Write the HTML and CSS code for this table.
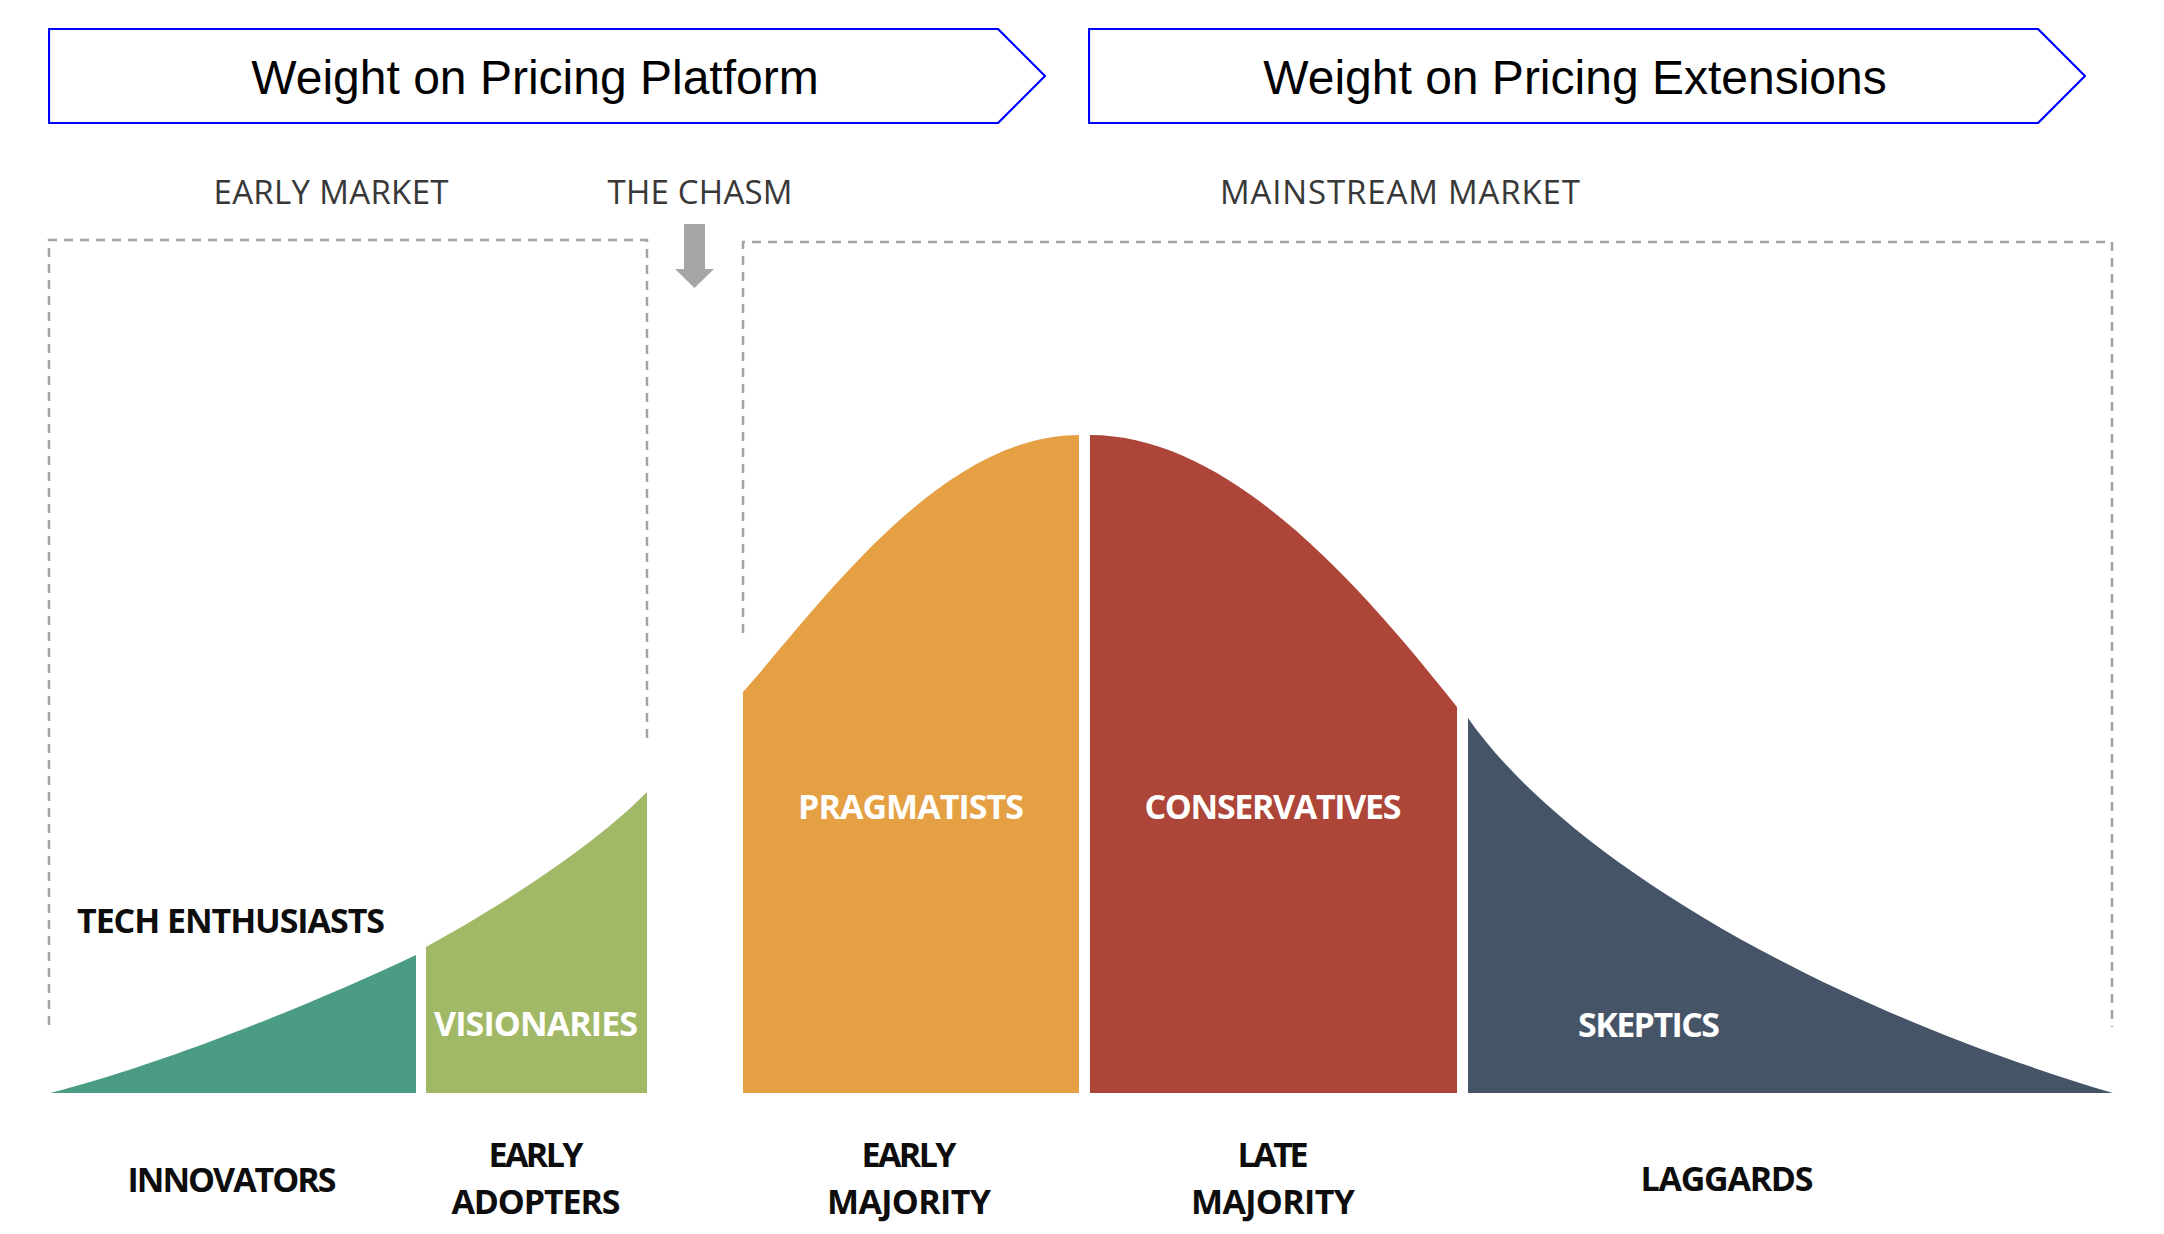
FILE: index.html
```html
<!DOCTYPE html>
<html lang="en">
<head>
<meta charset="utf-8">
<title>Crossing the Chasm – Pricing Weight</title>
<link rel="stylesheet" href="styles.css">
</head>
<body>
<div class="page">
  <header class="phases">
    <div class="phase">
      <svg class="phase-shape" viewBox="0 0 998 96" preserveAspectRatio="none" aria-hidden="true">
        <polygon points="1,1 950,1 997,48 950,95 1,95"/>
      </svg>
      <span class="phase-title">Weight on Pricing Platform</span>
    </div>
    <div class="phase">
      <svg class="phase-shape" viewBox="0 0 998 96" preserveAspectRatio="none" aria-hidden="true">
        <polygon points="1,1 950,1 997,48 950,95 1,95"/>
      </svg>
      <span class="phase-title">Weight on Pricing Extensions</span>
    </div>
  </header>

  <svg class="chart" viewBox="0 124 2164 1110" width="2164" height="1110">
    <!-- market headings -->
    <text class="market" x="331" y="204" textLength="235" lengthAdjust="spacing" text-anchor="middle">EARLY MARKET</text>
    <text class="market" x="700" y="204" textLength="185" lengthAdjust="spacing" text-anchor="middle">THE CHASM</text>
    <text class="market" x="1400" y="204" textLength="360" lengthAdjust="spacing" text-anchor="middle">MAINSTREAM MARKET</text>

    <!-- chasm arrow -->
    <path class="arrow" d="M684,224 H705 V269 H714 L694.5,288 L675,269 H684 Z"/>

    <!-- market frames -->
    <path class="frame" d="M49,1025 V240 H647 V740"/>
    <path class="frame" d="M743,633 V242 H2112 V1027"/>

    <!-- adoption curve segments -->
    <path class="seg seg-innovators" d="M50,1093 C150,1068 300,1010 416,955 V1093 Z"/>
    <path class="seg seg-early-adopters" d="M426,1093 V947 C490,912 590,850 647,792 V1093 Z"/>
    <path class="seg seg-early-majority" d="M743,1093 V692 C820,605 940,435 1079,435 V1093 Z"/>
    <path class="seg seg-late-majority" d="M1090,1093 V435 C1230,435 1360,585 1457,707 V1093 Z"/>
    <path class="seg seg-laggards" d="M1468,1093 V718 C1560,850 1800,1000 2113,1093 Z"/>

    <!-- segment personas -->
    <text class="persona dark" x="231" y="933" textLength="308" lengthAdjust="spacing" text-anchor="middle">TECH ENTHUSIASTS</text>
    <text class="persona light" x="536" y="1036" textLength="204" lengthAdjust="spacing" text-anchor="middle">VISIONARIES</text>
    <text class="persona light" x="911" y="819" textLength="226" lengthAdjust="spacing" text-anchor="middle">PRAGMATISTS</text>
    <text class="persona light" x="1273" y="819" textLength="257" lengthAdjust="spacing" text-anchor="middle">CONSERVATIVES</text>
    <text class="persona light" x="1649" y="1037" textLength="142" lengthAdjust="spacing" text-anchor="middle">SKEPTICS</text>

    <!-- segment names -->
    <text class="segment-name" x="232" y="1192" textLength="209" lengthAdjust="spacing" text-anchor="middle">INNOVATORS</text>
    <text class="segment-name" x="536" y="1167" textLength="95" lengthAdjust="spacing" text-anchor="middle">EARLY</text>
    <text class="segment-name" x="536" y="1214" textLength="169" lengthAdjust="spacing" text-anchor="middle">ADOPTERS</text>
    <text class="segment-name" x="909" y="1167" textLength="95" lengthAdjust="spacing" text-anchor="middle">EARLY</text>
    <text class="segment-name" x="909" y="1214" textLength="164" lengthAdjust="spacing" text-anchor="middle">MAJORITY</text>
    <text class="segment-name" x="1273" y="1167" textLength="71" lengthAdjust="spacing" text-anchor="middle">LATE</text>
    <text class="segment-name" x="1273" y="1214" textLength="164" lengthAdjust="spacing" text-anchor="middle">MAJORITY</text>
    <text class="segment-name" x="1727" y="1191" textLength="173" lengthAdjust="spacing" text-anchor="middle">LAGGARDS</text>
  </svg>
</div>
</body>
</html>
```

FILE: styles.css
```css
html, body {
  margin: 0;
  padding: 0;
  background: #ffffff;
}

.page {
  width: 2164px;
  height: 1234px;
  overflow: hidden;
  background: #ffffff;
}

.phases {
  display: flex;
  gap: 42px;
  padding: 28px 0 0 48px;
  height: 96px;
}

.phase {
  position: relative;
  width: 998px;
  height: 96px;
  display: flex;
  align-items: center;
  justify-content: center;
  padding: 2px 24px 0 0;
  box-sizing: border-box;
}

.phase-shape {
  position: absolute;
  inset: 0;
  width: 100%;
  height: 100%;
}

.phase-shape polygon {
  fill: #ffffff;
  stroke: #0000ff;
  stroke-width: 2.2;
  stroke-linejoin: miter;
}

.phase-title {
  position: relative;
  font-family: "Liberation Sans", Arial, sans-serif;
  font-size: 48px;
  color: #000000;
  white-space: nowrap;
}

.chart {
  display: block;
}

.market {
  font-family: "Open Sans", "Noto Sans", sans-serif;
  font-size: 33px;
  font-weight: 400;
  fill: #383838;
}

.arrow {
  fill: #a6a6a6;
}

.frame {
  fill: none;
  stroke: #a3a3a3;
  stroke-width: 2.5;
  stroke-dasharray: 9 7;
}

.seg-innovators { fill: #4b9c85; }
.seg-early-adopters { fill: #a1b966; }
.seg-early-majority { fill: #e6a044; }
.seg-late-majority { fill: #ad4538; }
.seg-laggards { fill: #465467; }

.persona,
.segment-name {
  font-family: "Open Sans", "Noto Sans", sans-serif;
  font-size: 34px;
  font-weight: 700;
}

.persona.dark,
.segment-name {
  fill: #0d0d0d;
}

.persona.light {
  fill: #ffffff;
}
```
